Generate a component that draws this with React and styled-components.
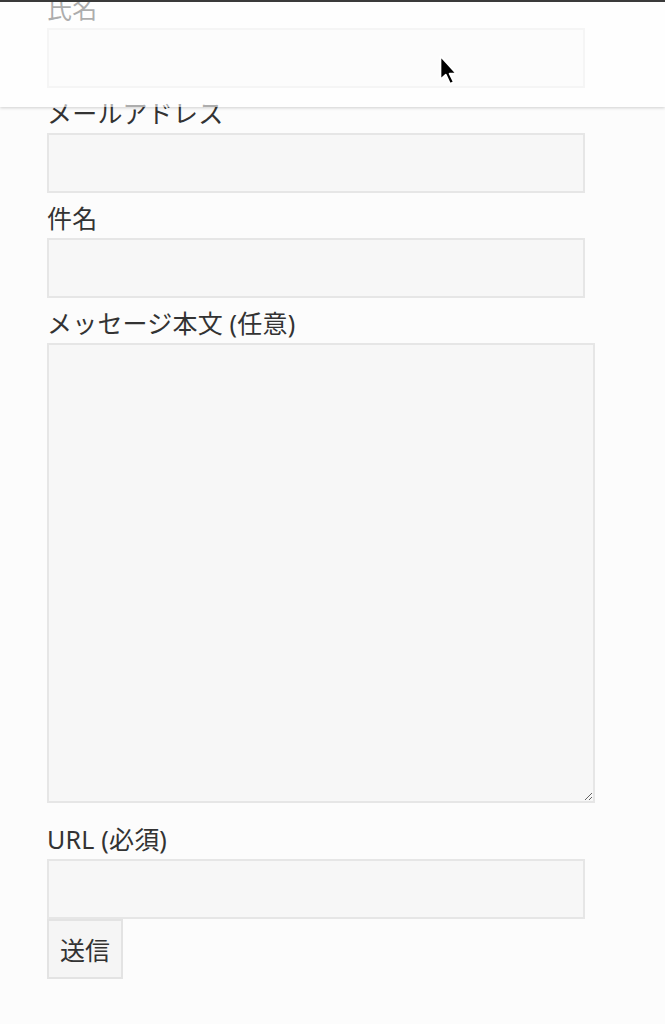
import React from "react";
import styled, { createGlobalStyle } from "styled-components";

const Global = createGlobalStyle`
  html, body {
    margin: 0;
    padding: 0;
    background: #fcfcfc;
    overflow: hidden;
  }
  body {
    font-family: "Noto Sans", "Noto Sans CJK JP", sans-serif;
    color: #333;
  }
`;

const Page = styled.div`
  position: relative;
  width: 665px;
  height: 1024px;
  overflow: hidden;
`;

const Form = styled.form`
  display: flex;
  flex-direction: column;
  align-items: flex-start;
  padding: 0 0 0 47px;
  margin-top: -12px;
`;

const Label = styled.label`
  display: block;
  box-sizing: border-box;
  height: 36px;
  padding-top: 4px;
  font-size: 25px;
  line-height: 32px;
  letter-spacing: 0.2px;
  color: #333;
  margin-top: ${(p) => p.$top || 0}px;
  margin-bottom: 4px;
  white-space: nowrap;
`;

const Input = styled.input`
  box-sizing: border-box;
  width: 538px;
  height: 60px;
  margin: 0 0 ${(p) => (p.$flush ? 0 : 5)}px 0;
  padding: 0 12px;
  background: #f7f7f7;
  border: 2px solid #e6e6e6;
  border-radius: 0;
  font-size: 24px;
  font-family: inherit;
  outline: none;
`;

const TextArea = styled.textarea`
  box-sizing: border-box;
  display: block;
  width: 548px;
  height: 460px;
  margin: 0;
  padding: 12px;
  background: #f7f7f7;
  border: 2px solid #e6e6e6;
  border-radius: 0;
  font-size: 24px;
  font-family: inherit;
  outline: none;
`;

const Submit = styled.button`
  box-sizing: border-box;
  width: 76px;
  height: 60px;
  margin: 0;
  padding: 0;
  background: #f5f5f5;
  border: 2px solid #e3e3e3;
  border-radius: 0;
  font-family: "Noto Sans", "Noto Sans CJK JP", sans-serif;
  font-size: 25px;
  color: #333;
`;

const Header = styled.div`
  position: absolute;
  top: 0;
  left: 0;
  right: 0;
  height: 105px;
  border-top: 2px solid #3a3a3a;
  background: rgba(255, 255, 255, 0.6);
  box-shadow: 0 1px 3px rgba(0, 0, 0, 0.18);
  z-index: 2;
`;

const Cursor = styled.svg`
  position: absolute;
  left: 437px;
  top: 54px;
  z-index: 3;
`;

export default function App() {
  return (
    <Page>
      <Global />
      <Form onSubmit={(e) => e.preventDefault()}>
        <Label>氏名</Label>
        <Input type="text" />
        <Label>メールアドレス</Label>
        <Input type="email" />
        <Label>件名</Label>
        <Input type="text" />
        <Label>メッセージ本文 (任意)</Label>
        <TextArea />
        <Label $top={16}>URL (必須)</Label>
        <Input type="url" $flush />
        <Submit type="submit">送信</Submit>
      </Form>
      <Header />
      <Cursor width="24" height="34" viewBox="0 0 22 32">
        <path
          d="M3 2 L3 24 L8 19.5 L12 28 L15.5 26.5 L11.5 18.5 L18 18.5 Z"
          fill="#000"
          stroke="#fff"
          strokeWidth="1.6"
          strokeLinejoin="round"
        />
      </Cursor>
    </Page>
  );
}
